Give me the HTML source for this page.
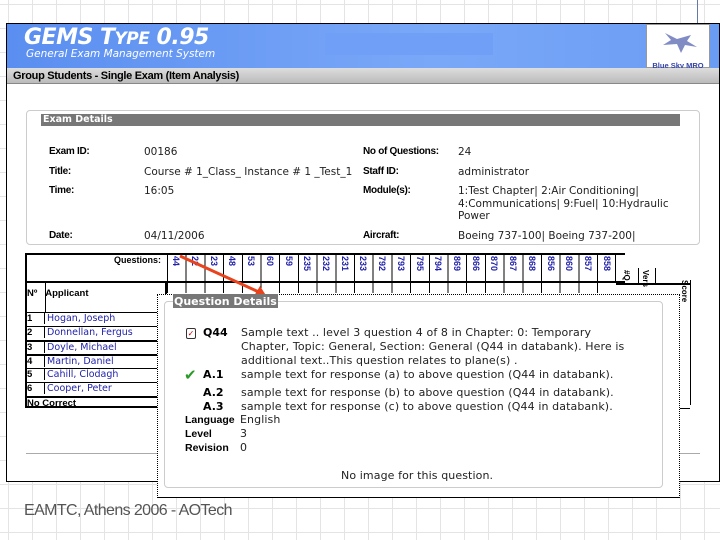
<!DOCTYPE html>
<html><head><meta charset="utf-8"><style>
*{margin:0;padding:0;box-sizing:border-box}
body{width:720px;height:540px;overflow:hidden;position:relative;font-family:"DejaVu Sans","Liberation Sans",sans-serif;background:#fff;
background-image:linear-gradient(to right,#e4e4e4 1px,transparent 1px),linear-gradient(to bottom,#e4e4e4 1px,transparent 1px);background-size:24px 24px;background-position:8px 4px}
.a{position:absolute;white-space:nowrap}
.win{left:6px;top:23px;width:714px;height:459px;background:#fff;border:1px solid #000}
.hdr{left:7px;top:24px;width:712px;height:44px;background:linear-gradient(90deg,#5a8ef0,#7aa8f8 60%,#6a9cf4)}
.bar{left:7px;top:68px;width:712px;height:16px;background:linear-gradient(#ddd,#bbb);border-bottom:1px solid #888;font:bold 11px "Liberation Sans",sans-serif;padding:2px 0 0 6px;letter-spacing:-.3px}
.lbl{font:bold 10px "Liberation Sans",sans-serif;letter-spacing:-.3px}
.val{font:10.5px "DejaVu Sans",sans-serif;color:#222}
.lnk{color:#2222aa;font-weight:normal;font-family:"DejaVu Sans",sans-serif}
.q{font:11px "DejaVu Sans",sans-serif;color:#222;line-height:14px;letter-spacing:.1px}
.qb{font:bold 11px "DejaVu Sans",sans-serif}
.cn{position:absolute;top:256px;font:bold 9px 'Liberation Sans',sans-serif;color:#22a;writing-mode:vertical-rl;white-space:nowrap}
.row{height:14px;font:9.5px 'DejaVu Sans'}
.row b{font-family:'Liberation Sans';display:inline-block;width:20px;padding-left:2px;border-right:1px solid #000}
.row span{padding-left:2px}
</style></head><body>
<div class="a win"></div>
<div class="a hdr"></div>
<div class="a" style="left:325px;top:33px;width:168px;height:22px;background:#6f9ff6"></div>
<div class="a" style="left:24px;top:25px;color:#fff;font:italic bold 22px 'DejaVu Sans',sans-serif;letter-spacing:-.5px">GEMS T<span style="font-size:17px">YPE</span> 0.95</div>
<div class="a" style="left:26px;top:48px;color:#fff;font:italic 10.5px 'DejaVu Sans',sans-serif">General Exam Management System</div>
<div class="a" style="left:646px;top:24px;width:64px;height:44px;background:#fff;border:1px solid #999">
<svg width="62" height="32" viewBox="0 0 62 32"><path d="M18 8 L30 14 L44 10 L40 16 L50 22 L38 20 L34 28 L30 19 L16 20 L24 15 Z" fill="#6a78b8" opacity=".85"/></svg>
<div style="font:bold 7.5px 'Liberation Sans',sans-serif;color:#3344aa;text-align:center">Blue Sky MRO</div></div>
<div class="a bar">Group Students - Single Exam (Item Analysis)</div>

<div class="a" style="left:26px;top:110px;width:674px;height:135px;border:1px solid #ccc;border-radius:4px"></div>
<div class="a" style="left:41px;top:114px;width:639px;height:12px;background:#777;color:#fff;font:bold 9.5px 'DejaVu Sans',sans-serif;padding-left:2px;line-height:12px">Exam Details</div>
<div class="a lbl" style="left:49px;top:146px">Exam ID:</div><div class="a val" style="left:144px;top:146px">00186</div>
<div class="a lbl" style="left:49px;top:166px">Title:</div><div class="a val" style="left:144px;top:166px">Course # 1_Class_ Instance # 1 _Test_1</div>
<div class="a lbl" style="left:49px;top:185px">Time:</div><div class="a val" style="left:144px;top:185px">16:05</div>
<div class="a lbl" style="left:49px;top:230px">Date:</div><div class="a val" style="left:144px;top:230px">04/11/2006</div>
<div class="a lbl" style="left:363px;top:146px">No of Questions:</div><div class="a val" style="left:458px;top:146px">24</div>
<div class="a lbl" style="left:363px;top:166px">Staff ID:</div><div class="a val" style="left:458px;top:166px">administrator</div>
<div class="a lbl" style="left:363px;top:185px">Module(s):</div><div class="a val" style="left:458px;top:185px;line-height:12.5px">1:Test Chapter| 2:Air Conditioning|<br>4:Communications| 9:Fuel| 10:Hydraulic<br>Power</div>
<div class="a lbl" style="left:363px;top:230px">Aircraft:</div><div class="a val" style="left:458px;top:230px">Boeing 737-100| Boeing 737-200|</div>

<!-- table -->
<div class="a" style="left:25px;top:253px;width:600px;height:30px;border:2px solid #000;border-right:none"></div>
<div class="a" style="left:114px;top:255px;font:bold 9px 'Liberation Sans',sans-serif">Questions:</div>
<div class="a" style="left:167px;top:253px;width:449px;height:30px;background:repeating-linear-gradient(90deg,#000 0 1px,transparent 1px 18.7px);border-right:1px solid #000"></div>
<span class="cn" style="left:171px">44</span><span class="cn" style="left:190px">22</span><span class="cn" style="left:209px">23</span><span class="cn" style="left:227px">48</span><span class="cn" style="left:246px">53</span><span class="cn" style="left:265px">60</span><span class="cn" style="left:284px">59</span><span class="cn" style="left:302px">235</span><span class="cn" style="left:321px">232</span><span class="cn" style="left:340px">231</span><span class="cn" style="left:358px">233</span><span class="cn" style="left:377px">792</span><span class="cn" style="left:396px">793</span><span class="cn" style="left:415px">795</span><span class="cn" style="left:433px">794</span><span class="cn" style="left:452px">869</span><span class="cn" style="left:471px">866</span><span class="cn" style="left:489px">870</span><span class="cn" style="left:508px">867</span><span class="cn" style="left:527px">868</span><span class="cn" style="left:546px">856</span><span class="cn" style="left:564px">860</span><span class="cn" style="left:583px">857</span><span class="cn" style="left:602px">858</span>
<div class="a" style="left:25px;top:283px;width:142px;height:125px;border:2px solid #000;border-top:none"></div>
<div class="a" style="left:45px;top:283px;width:1px;height:30px;background:#000"></div>
<div class="a" style="left:27px;top:288px;font:bold 9.5px 'Liberation Sans',sans-serif">Nº&nbsp;&nbsp;&nbsp;Applicant</div>
<div class="a" style="left:167px;top:283px;width:449px;height:10px;background:repeating-linear-gradient(90deg,#000 0 1px,transparent 1px 18.7px)"></div>
<div class="a" style="left:25px;top:312px;width:142px">
<div class="row" style="border-top:1px solid #000"><b>1</b><span class="lnk">Hogan, Joseph</span></div>
<div class="row" style="border-top:1px solid #000"><b>2</b><span class="lnk">Donnellan, Fergus</span></div>
<div class="row" style="border-top:2px solid #000"><b>3</b><span class="lnk">Doyle, Michael</span></div>
<div class="row" style="border-top:2px solid #000"><b>4</b><span class="lnk">Martin, Daniel</span></div>
<div class="row" style="border-top:1px solid #000"><b>5</b><span class="lnk">Cahill, Clodagh</span></div>
<div class="row" style="border-top:1px solid #000"><b>6</b><span class="lnk">Cooper, Peter</span></div>
<div class="row" style="border-top:2px solid #000;font:bold 9.5px 'Liberation Sans';padding-left:2px">No Correct</div>
</div>
<div class="a" style="left:616px;top:283px;width:75px;height:2px;background:#000"></div>
<div class="a" style="left:622px;top:270px;font:bold 8px 'Liberation Sans';writing-mode:vertical-rl">#Q</div>
<div class="a" style="left:638px;top:268px;width:1px;height:15px;background:#000"></div>
<div class="a" style="left:641px;top:270px;font:bold 8px 'Liberation Sans';writing-mode:vertical-rl">Vers</div>
<div class="a" style="left:655px;top:268px;width:1px;height:15px;background:#000"></div>
<div class="a" style="left:680px;top:280px;font:bold 8px 'Liberation Sans';writing-mode:vertical-rl">Score</div>
<div class="a" style="left:690px;top:280px;width:1px;height:125px;background:#000"></div>
<div class="a" style="left:676px;top:408px;width:14px;height:1px;background:#000"></div>
<div class="a" style="left:26px;top:453px;width:674px;height:1px;background:#aaa"></div>

<!-- arrow -->
<svg class="a" style="left:175px;top:253px" width="100" height="50"><line x1="5" y1="3" x2="86" y2="40" stroke="#e8431c" stroke-width="3"/><path d="M92 44 L79 43 L85 33 Z" fill="#e8431c"/></svg>

<!-- popup -->
<div class="a" style="left:157px;top:294px;width:523px;height:204px;background:#fff;border:1px dotted #000;border-bottom:1px solid #000"></div>
<div class="a" style="left:164px;top:301px;width:499px;height:187px;border:1px solid #ccc;border-radius:4px"></div>
<div class="a" style="left:173px;top:294px;background:#777;color:#fff;font:bold 11px 'DejaVu Sans',sans-serif;padding:1px 1px;height:14px;line-height:13px">Question Details</div>
<div class="a" style="left:186px;top:328px;width:10px;height:11px;border:1px solid #333;border-radius:2px;font:8px sans-serif;color:#c00;text-align:center;line-height:9px">✓</div>
<div class="a qb" style="left:203px;top:326px">Q44</div>
<div class="a q" style="left:241px;top:326px">Sample text .. level 3 question 4 of 8 in Chapter: 0: Temporary<br>Chapter, Topic: General, Section: General (Q44 in databank). Here is<br>additional text..This question relates to plane(s) .</div>
<div class="a" style="left:184px;top:366px;color:#2a9a2a;font:bold 15px 'DejaVu Sans'">✔</div>
<div class="a qb" style="left:203px;top:368px">A.1</div><div class="a q" style="left:241px;top:368px">sample text for response (a) to above question (Q44 in databank).</div>
<div class="a qb" style="left:203px;top:386px">A.2</div><div class="a q" style="left:241px;top:386px">sample text for response (b) to above question (Q44 in databank).</div>
<div class="a qb" style="left:203px;top:400px">A.3</div><div class="a q" style="left:241px;top:400px">sample text for response (c) to above question (Q44 in databank).</div>
<div class="a" style="left:185px;top:414px;font:bold 10.5px 'Liberation Sans'">Language</div><div class="a q" style="left:240px;top:413px">English</div>
<div class="a" style="left:185px;top:428px;font:bold 10.5px 'Liberation Sans'">Level</div><div class="a q" style="left:240px;top:427px">3</div>
<div class="a" style="left:185px;top:442px;font:bold 10.5px 'Liberation Sans'">Revision</div><div class="a q" style="left:240px;top:441px">0</div>
<div class="a q" style="left:341px;top:469px">No image for this question.</div>
<div class="a" style="left:24px;top:502px;font:16px 'Liberation Sans',sans-serif;color:#555;letter-spacing:-.6px">EAMTC, Athens 2006 - AOTech</div>
<div class="a" style="left:697px;top:0;width:1px;height:23px;background:#6677aa"></div>
</body></html>
